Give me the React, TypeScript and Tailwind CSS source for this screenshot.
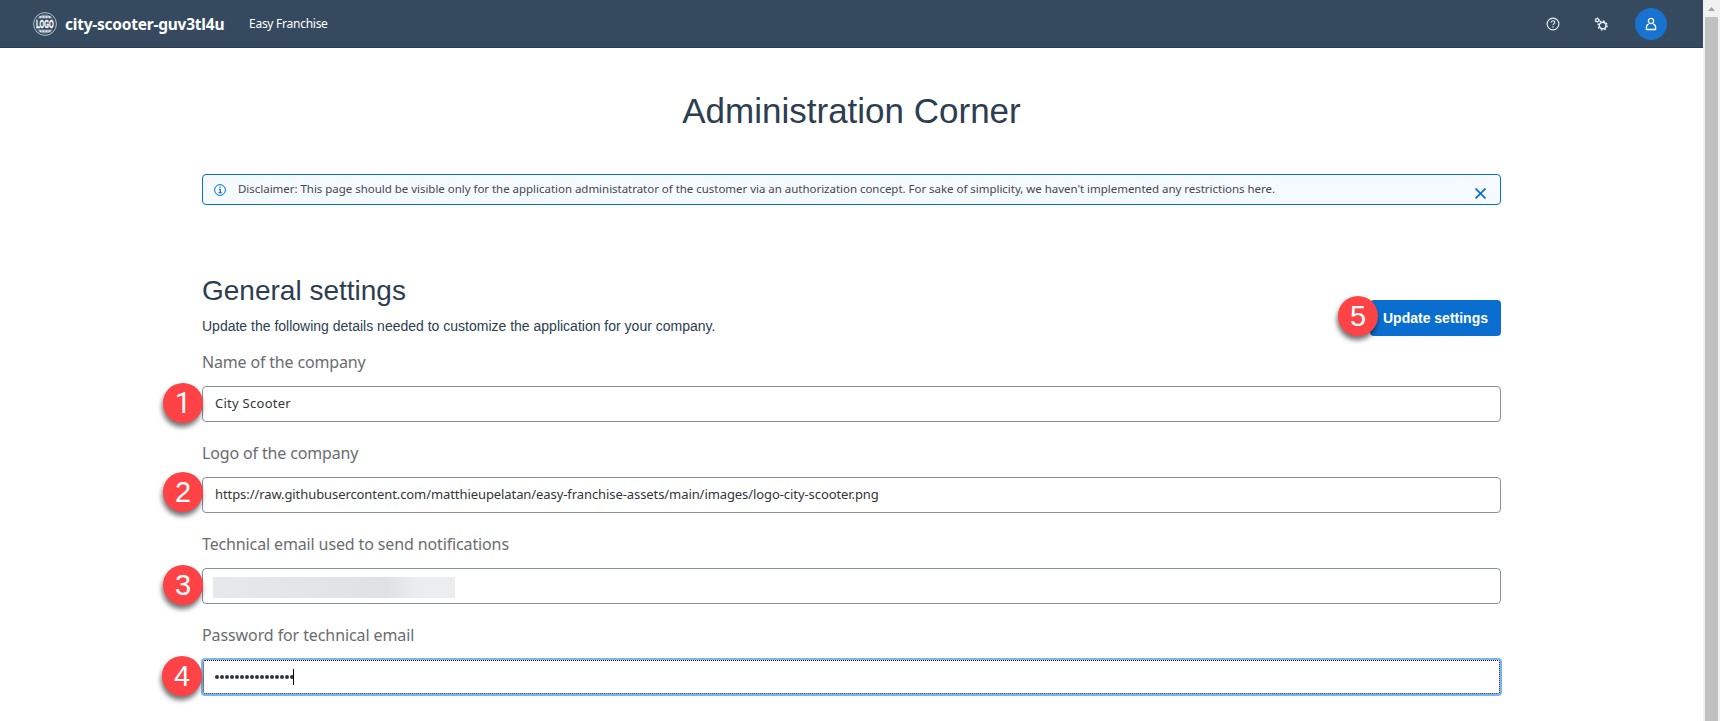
import React from "react";

const sap = "font-['Noto_Sans',sans-serif]";

function Badge({ n, className }: { n: number; className: string }) {
  return (
    <span
      className={
        "absolute z-10 flex size-10 items-center justify-center rounded-full bg-[#fe4245] text-[29px] leading-none font-normal text-white shadow-[-1px_4px_5px_rgba(0,0,0,0.55)] " +
        (n === 1 ? "font-['Roboto',sans-serif] " : "font-['Liberation_Sans',sans-serif] ") +
        className
      }
    >
      {n}
    </span>
  );
}

function Field({
  label,
  labelClass,
  badge,
  badgeClass,
  focused = false,
  children,
}: {
  label: string;
  labelClass: string;
  badge: number;
  badgeClass: string;
  focused?: boolean;
  children: React.ReactNode;
}) {
  return (
    <div className="flex h-[91px] flex-col">
      <div className="h-9 text-[16px] leading-6 text-[#6a6d70]">
        <span className={"inline-block whitespace-nowrap " + labelClass}>{label}</span>
      </div>
      <div
        className={
          "relative flex h-9 items-center rounded-[4px] border bg-white pl-3 text-[13px] text-[#32363a] " +
          (focused ? "border-transparent" : "border-[#89919a]")
        }
      >
        {focused && (
          <span className="absolute -inset-x-[2px] -inset-y-[2px] rounded-[4px] border-2 border-[#74b6f8]">
            <span className="absolute inset-0 rounded-[2px] border border-dotted border-black" />
          </span>
        )}
        {children}
        <Badge n={badge} className={badgeClass} />
      </div>
    </div>
  );
}

function LogoMark() {
  return (
    <svg viewBox="0 0 24 24" className="size-6 overflow-visible" fill="none">
      <circle cx="12" cy="12" r="11.4" stroke="#b4bfc9" strokeWidth="1" />
      <path d="M4.200 6.500a9.600 9.600 0 0 1 15.600 0zM4.200 17.500a9.600 9.600 0 0 0 15.600 0z" fill="#8191a1" />
      <path d="M6.500 5h11M6.500 19.200h11" stroke="#dce2e7" strokeWidth="2" strokeDasharray="2 1" />
      <text
        transform="translate(2.9 16) scale(0.87 1.6)"
        fontFamily="Liberation Sans"
        fontWeight="bold"
        fontSize="7"
        fill="#fff"
        stroke="#fff"
        strokeWidth="0.25"
      >
        LOGO
      </text>
    </svg>
  );
}

function HelpIcon() {
  return (
    <svg viewBox="0 0 14 14" className="size-[14px]" fill="none" stroke="#e8f2fb" strokeWidth="1.1">
      <circle cx="7" cy="7" r="5.9" />
      <path d="M5.2 5.6c0-1.1.8-1.8 1.8-1.8s1.8.7 1.8 1.6c0 1.2-1.8 1.3-1.8 2.7" />
      <path d="M7 9.2v1.3" strokeWidth="1.3" />
    </svg>
  );
}

function GearsIcon() {
  return (
    <svg viewBox="0 0 14 14" className="size-[14px]" fill="none" stroke="#e8f2fb">
      <circle cx="8.6" cy="8.5" r="3.3" strokeWidth="1.4" />
      <circle cx="8.6" cy="8.5" r="4.5" strokeWidth="1.4" strokeDasharray="1.7 1.834" />
      <circle cx="3.2" cy="3.2" r="1.5" strokeWidth="1.2" />
      <circle cx="3.2" cy="3.2" r="2.4" strokeWidth="1" strokeDasharray="1.1 1.413" />
    </svg>
  );
}

function PersonIcon() {
  return (
    <svg viewBox="0 0 14 14" className="size-[14px]" fill="none" stroke="#fff" strokeWidth="1.3">
      <circle cx="7" cy="4" r="2.600" />
      <path
        d="M4.700 7.100C3 7.500 2.400 8.700 2.400 10.400v2.100h9.200v-2.100c0-1.700-.6-2.900-2.300-3.300"
        strokeLinejoin="round"
      />
    </svg>
  );
}

function InfoIcon() {
  return (
    <svg viewBox="0 0 12 12" className="size-3" fill="none" stroke="#0a6ed1">
      <circle cx="6" cy="6" r="5.400" strokeWidth="1" />
      <path d="M5 5.300h1.200v3.200M4.600 8.700h3" strokeWidth="1.200" />
      <path d="M5.400 3.200h1.300" strokeWidth="1.300" />
    </svg>
  );
}

export default function App() {
  return (
    <div className={"flex h-[721px] w-[1720px] overflow-hidden bg-white " + sap}>
      <div className="flex w-[1703px] flex-col">
        <header className="flex h-12 shrink-0 items-center border-b border-[#2c3d4f] bg-[#354a5f] pl-[33px] pr-9 text-white">
          <LogoMark />
          <span className="ml-2 w-[184px] whitespace-nowrap text-[15.5px] font-bold leading-6 tracking-[-0.23px]">
            city-scooter-guv3tl4u
          </span>
          <span className="whitespace-nowrap text-[12px] leading-6 tracking-[-0.26px]">Easy Franchise</span>
          <div className="ml-auto flex items-center">
            <HelpIcon />
            <span className="ml-[34px] flex">
              <GearsIcon />
            </span>
            <span className="ml-[27px] flex size-8 items-center justify-center rounded-full bg-[#1872d0]">
              <PersonIcon />
            </span>
          </div>
        </header>

        <main className="flex flex-col px-[202px]">
          <h1 className="mt-[40px] h-[46px] text-center font-['Liberation_Sans',sans-serif] text-[35px] leading-[46px] text-[#2c3e50]">
            Administration Corner
          </h1>

          <div className="mt-10 flex h-[31px] items-center rounded-[4px] border border-[#0a6ed1] bg-[#f5faff] pl-[11px] pr-[14px]">
            <InfoIcon />
            <span className="-mt-px ml-3 whitespace-nowrap text-[11.5px] leading-4 tracking-[-0.03px] text-[#45494d]">
              Disclaimer: This page should be visible only for the application administatrator of the customer via an
              authorization concept. For sake of simplicity, we haven't implemented any restrictions here.
            </span>
            <svg viewBox="0 0 11 11" className="ml-auto mt-[8px] size-[11px]" stroke="#0a6ed1" strokeWidth="1.7">
              <path d="M.5.5l10 10M10.500.5l-10 10" />
            </svg>
          </div>

          <section className="mt-[67px] flex h-[79px] justify-between font-['Liberation_Sans',sans-serif] text-[#2c3e50]">
            <div>
              <h2 className="h-[38px] text-[28px] leading-[38px]">General settings</h2>
              <p className="mt-[6px] text-[14px] leading-5">
                Update the following details needed to customize the application for your company.
              </p>
            </div>
            <div className="relative mt-7 flex h-9 w-[131px] items-center justify-center rounded-[4px] bg-[#0a6ed1] text-[14px] font-bold text-white">
              Update settings
              <Badge n={5} className="-left-8 -top-1" />
            </div>
          </section>

          <div className="mt-[-1px] flex flex-col">
            <Field
              label="Name of the company"
              labelClass="tracking-[-0.17px]"
              badge={1}
              badgeClass="left-[-40px] top-[-4px]"
            >
              <span className="whitespace-nowrap tracking-[0.27px]">City Scooter</span>
            </Field>
            <Field
              label="Logo of the company"
              labelClass="tracking-[-0.15px]"
              badge={2}
              badgeClass="left-[-40px] top-[-6px]"
            >
              <span className="whitespace-nowrap tracking-[-0.08px]">
                https://raw.githubusercontent.com/matthieupelatan/easy-franchise-assets/main/images/logo-city-scooter.png
              </span>
            </Field>
            <Field
              label="Technical email used to send notifications"
              labelClass="tracking-[-0.13px]"
              badge={3}
              badgeClass="left-[-40px] top-[-4px]"
            >
              <span className="-ml-[2px] mt-[3px] h-[21px] w-[242px] bg-linear-to-r from-[#e7e8e9] from-0% via-[#dfe2e3] via-72% to-[#ecedee] to-85%" />
            </Field>
            <Field
              label="Password for technical email"
              labelClass="tracking-[-0.1px]"
              badge={4}
              badgeClass="left-[-41px] top-[-4px]"
              focused
            >
              <span className="flex items-center gap-px">
                {Array.from({ length: 16 }, (_, i) => (
                  <span key={i} className="size-1 rounded-full bg-[#2c3440]" />
                ))}
              </span>
              <span className="-ml-px h-4 w-px bg-black" />
            </Field>
          </div>
        </main>
      </div>

      <div className="flex w-[17px] flex-col items-center bg-[#f1f1f1]">
        <svg viewBox="0 0 17 17" className="size-[17px] shrink-0" fill="#a3a3a3">
          <path d="M5 11h7L8.500 7z" />
        </svg>
        <div className="w-[13px] grow bg-[#c1c1c1]" />
      </div>
    </div>
  );
}
